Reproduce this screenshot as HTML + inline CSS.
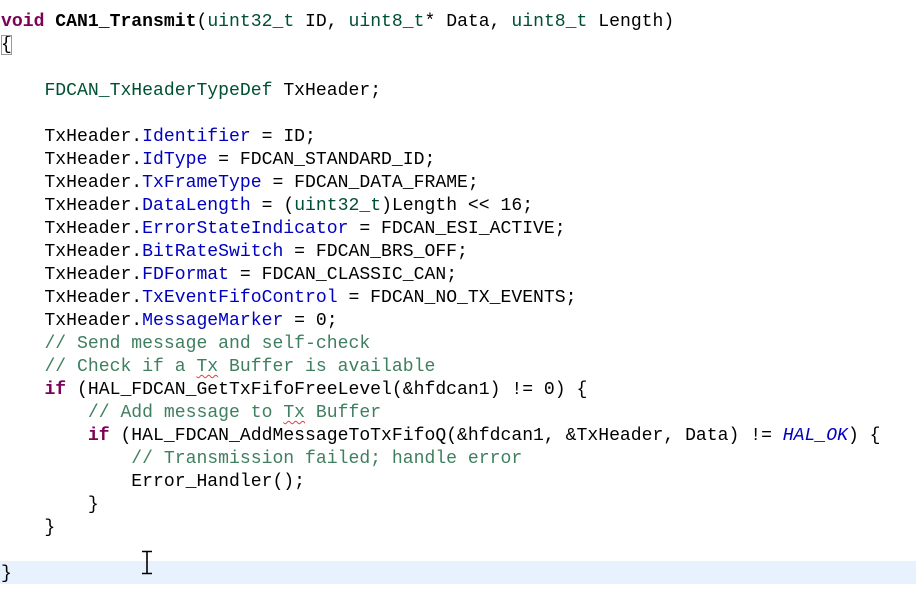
<!DOCTYPE html>
<html><head><meta charset="utf-8"><style>
html,body{margin:0;padding:0;background:#fff;width:916px;height:598px;overflow:hidden}
pre{margin:0;position:absolute;left:1px;top:11px;font-family:"Liberation Mono",monospace;font-size:18.1px;line-height:23px;color:#000}
.k{color:#7f0055;font-weight:bold}
.b{font-weight:bold}
.t{color:#005032}
.f{color:#0000c0}
.c{color:#3f7f5f}
.i{color:#0000c0;font-style:italic}
.sq{text-decoration:underline wavy #e04040;text-decoration-thickness:1px;text-underline-offset:3px}
.hl{position:absolute;left:0;top:561px;width:916px;height:23px;background:#e8f2fe}
.br{outline:1px solid #999;outline-offset:-1px}
</style></head><body>
<div class="hl"></div>
<pre><span class="k">void</span> <span class="b">CAN1_Transmit</span>(<span class="t">uint32_t</span> ID, <span class="t">uint8_t</span>* Data, <span class="t">uint8_t</span> Length)
<span class="br">{</span>

    <span class="t">FDCAN_TxHeaderTypeDef</span> TxHeader;

    TxHeader.<span class="f">Identifier</span> = ID;
    TxHeader.<span class="f">IdType</span> = FDCAN_STANDARD_ID;
    TxHeader.<span class="f">TxFrameType</span> = FDCAN_DATA_FRAME;
    TxHeader.<span class="f">DataLength</span> = (<span class="t">uint32_t</span>)Length &lt;&lt; 16;
    TxHeader.<span class="f">ErrorStateIndicator</span> = FDCAN_ESI_ACTIVE;
    TxHeader.<span class="f">BitRateSwitch</span> = FDCAN_BRS_OFF;
    TxHeader.<span class="f">FDFormat</span> = FDCAN_CLASSIC_CAN;
    TxHeader.<span class="f">TxEventFifoControl</span> = FDCAN_NO_TX_EVENTS;
    TxHeader.<span class="f">MessageMarker</span> = 0;
    <span class="c">// Send message and self-check</span>
    <span class="c">// Check if a <span class="sq">Tx</span> Buffer is available</span>
    <span class="k">if</span> (HAL_FDCAN_GetTxFifoFreeLevel(&amp;hfdcan1) != 0) {
        <span class="c">// Add message to <span class="sq">Tx</span> Buffer</span>
        <span class="k">if</span> (HAL_FDCAN_AddMessageToTxFifoQ(&amp;hfdcan1, &amp;TxHeader, Data) != <span class="i">HAL_OK</span>) {
            <span class="c">// Transmission failed; handle error</span>
            Error_Handler();
        }
    }

}</pre>
<svg style="position:absolute;left:139px;top:550px" width="16" height="26"><path d="M3 1.5H13M8 1.5V23.5M3 23.5H13" stroke="#000" stroke-width="1.6" fill="none"/></svg>
</body></html>
